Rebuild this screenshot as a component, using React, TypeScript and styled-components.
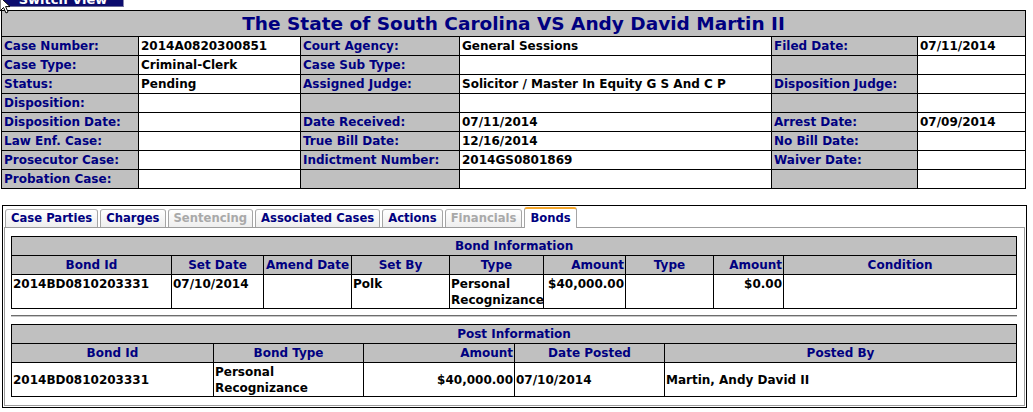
import styled, { createGlobalStyle } from 'styled-components';

const GlobalStyle = createGlobalStyle`
  html, body {
    margin: 0;
    padding: 0;
    background: #fff;
  }
  body {
    font-family: "DejaVu Sans", Verdana, sans-serif;
    font-size: 12px;
    font-weight: bold;
    color: #000;
  }
`;

const NAVY = '#000080';

type Cell = [string, string];

const caseRows: Cell[][] = [
  [['Case Number:', '2014A0820300851'], ['Court Agency:', 'General Sessions'], ['Filed Date:', '07/11/2014']],
  [['Case Type:', 'Criminal-Clerk'], ['Case Sub Type:', ''], ['', '']],
  [['Status:', 'Pending'], ['Assigned Judge:', 'Solicitor / Master In Equity G S And C P'], ['Disposition Judge:', '']],
  [['Disposition:', ''], ['', ''], ['', '']],
  [['Disposition Date:', ''], ['Date Received:', '07/11/2014'], ['Arrest Date:', '07/09/2014']],
  [['Law Enf. Case:', ''], ['True Bill Date:', '12/16/2014'], ['No Bill Date:', '']],
  [['Prosecutor Case:', ''], ['Indictment Number:', '2014GS0801869'], ['Waiver Date:', '']],
  [['Probation Case:', ''], ['', ''], ['', '']],
];

const tabs = [
  { name: 'Case Parties', disabled: false },
  { name: 'Charges', disabled: false },
  { name: 'Sentencing', disabled: true },
  { name: 'Associated Cases', disabled: false },
  { name: 'Actions', disabled: false },
  { name: 'Financials', disabled: true },
  { name: 'Bonds', disabled: false, active: true },
];

const Page = styled.div`
  position: relative;
  display: flex;
  flex-direction: column;
  align-items: flex-start;
`;

const Cursor = styled.svg`
  position: absolute;
  top: -4px;
  left: -1px;
  z-index: 5;
`;

const SwitchButton = styled.div`
  margin: -12px 0 0 3px;
  width: 121px;
  height: 19px;
  box-sizing: border-box;
  padding-top: 4px;
  line-height: 15px;
  text-align: center;
  background: #0c0c6e;
  color: #fff;
  font-size: 13px;
  border-right: 1px solid #8a8ab0;
  border-bottom: 1px solid #6a6a98;
`;

const CaseTable = styled.table`
  margin: 3px 0 0 1px;
  width: 1025px;
  border-collapse: collapse;
  table-layout: fixed;
  border: 1px solid #000;
`;

const Col = styled.col<{ $w: number }>`
  width: ${(p) => p.$w}px;
`;

const TitleCell = styled.td`
  height: 25px;
  padding: 0;
  background: #c0c0c0;
  color: ${NAVY};
  font-size: 18.5px;
  text-align: center;
  border: 1px solid #000;
`;

const InfoRow = styled.tr`
  height: 19px;
`;

const Label = styled.td`
  padding: 1px 2px 0;
  background: #c0c0c0;
  color: ${NAVY};
  border: 1px solid #000;
  white-space: nowrap;
  overflow: hidden;
  line-height: 15px;
`;

const Value = styled.td`
  padding: 1px 2px 0;
  background: #fff;
  border: 1px solid #000;
  white-space: nowrap;
  overflow: hidden;
  line-height: 15px;
`;

const TabBox = styled.div`
  margin: 16px 0 0 2px;
  width: 1025px;
  box-sizing: border-box;
  border: 1px solid #000;
  padding: 3px 0 1px;
  background: #fff;
`;

const TabStrip = styled.div`
  position: relative;
  z-index: 1;
  display: flex;
  align-items: flex-end;
  gap: 2px;
  padding-left: 2px;
  height: 18px;
`;

const Tab = styled.div<{ $active?: boolean; $disabled?: boolean }>`
  box-sizing: border-box;
  height: ${(p) => (p.$active ? '21px' : '18px')};
  margin-bottom: ${(p) => (p.$active ? '-1px' : '0')};
  padding: 0 5px;
  font-size: 11.6px;
  line-height: ${(p) => (p.$active ? '18px' : '17px')};
  color: ${(p) => (p.$disabled ? '#a9a9a9' : NAVY)};
  border: 1px solid #a5a5a5;
  border-bottom: none;
  border-top: ${(p) => (p.$active ? '2px solid #f4a62a' : '1px solid #b5b5b5')};
  border-radius: 3px 3px 0 0;
  background: ${(p) => (p.$active ? '#fff' : 'linear-gradient(#ffffff, #eeeeee)')};
  white-space: nowrap;
`;

const Panel = styled.div`
  margin: 0 1px;
  border: 1px solid #9c9c9c;
  padding: 8px 6px 8px 6px;
`;

const GridTable = styled.table`
  width: 1006px;
  border-collapse: collapse;
  table-layout: fixed;
  border: 1px solid #000;
`;

const HeadRow = styled.tr`
  height: 19px;
`;

const HeadCell = styled.th<{ $align?: string }>`
  padding: 1px 1px 0;
  background: #c0c0c0;
  color: ${NAVY};
  border: 1px solid #000;
  text-align: ${(p) => p.$align || 'center'};
  line-height: 15px;
  white-space: nowrap;
`;

const DataRow = styled.tr<{ $h: number }>`
  height: ${(p) => p.$h}px;
`;

const DataCell = styled.td<{ $align?: string; $valign?: string }>`
  padding: 1px 1px 0;
  border: 1px solid #000;
  text-align: ${(p) => p.$align || 'left'};
  vertical-align: ${(p) => p.$valign || 'top'};
  line-height: 16px;
`;

const Divider = styled.hr`
  margin: 6px 0 7px 0;
  width: 1006px;
  height: 0;
  border: none;
  border-top: 1px solid #6d6d6d;
  border-bottom: 1px solid #c8c8c8;
`;

const bondCols = [160, 92, 88, 98, 94, 82, 88, 70, 233];
const postCols = [202, 150, 151, 150, 352];
const caseCols = [137, 162, 159, 312, 146, 108];

export default function App() {
  return (
    <>
      <GlobalStyle />
      <Page>
        <Cursor width="12" height="18" viewBox="0 0 12 18">
          <path d="M1 1 L1 15 L4.5 11.5 L7 17 L9 16 L6.6 10.6 L11 10.6 Z" fill="#fff" stroke="#000" strokeWidth="1" />
        </Cursor>
        <SwitchButton>Switch View</SwitchButton>

        <CaseTable>
          <colgroup>
            {caseCols.map((w, i) => (
              <Col key={i} $w={w} />
            ))}
          </colgroup>
          <tbody>
            <tr>
              <TitleCell colSpan={6}>The State of South Carolina VS Andy David Martin II</TitleCell>
            </tr>
            {caseRows.map((row, r) => (
              <InfoRow key={r}>
                {row.map(([label, value], c) => [
                  <Label key={`l${c}`}>{label}</Label>,
                  <Value key={`v${c}`}>{value}</Value>,
                ])}
              </InfoRow>
            ))}
          </tbody>
        </CaseTable>

        <TabBox>
          <TabStrip>
            {tabs.map((t) => (
              <Tab key={t.name} $active={t.active} $disabled={t.disabled}>
                {t.name}
              </Tab>
            ))}
          </TabStrip>
          <Panel>
            <GridTable>
              <colgroup>
                {bondCols.map((w, i) => (
                  <Col key={i} $w={w} />
                ))}
              </colgroup>
              <tbody>
                <HeadRow>
                  <HeadCell colSpan={9}>Bond Information</HeadCell>
                </HeadRow>
                <HeadRow>
                  <HeadCell>Bond Id</HeadCell>
                  <HeadCell>Set Date</HeadCell>
                  <HeadCell>Amend Date</HeadCell>
                  <HeadCell>Set By</HeadCell>
                  <HeadCell>Type</HeadCell>
                  <HeadCell $align="right">Amount</HeadCell>
                  <HeadCell>Type</HeadCell>
                  <HeadCell $align="right">Amount</HeadCell>
                  <HeadCell>Condition</HeadCell>
                </HeadRow>
                <DataRow $h={34}>
                  <DataCell>2014BD0810203331</DataCell>
                  <DataCell>07/10/2014</DataCell>
                  <DataCell></DataCell>
                  <DataCell>Polk</DataCell>
                  <DataCell>Personal Recognizance</DataCell>
                  <DataCell $align="right">$40,000.00</DataCell>
                  <DataCell></DataCell>
                  <DataCell $align="right">$0.00</DataCell>
                  <DataCell></DataCell>
                </DataRow>
              </tbody>
            </GridTable>

            <Divider />

            <GridTable>
              <colgroup>
                {postCols.map((w, i) => (
                  <Col key={i} $w={w} />
                ))}
              </colgroup>
              <tbody>
                <HeadRow>
                  <HeadCell colSpan={5}>Post Information</HeadCell>
                </HeadRow>
                <HeadRow>
                  <HeadCell>Bond Id</HeadCell>
                  <HeadCell>Bond Type</HeadCell>
                  <HeadCell $align="right">Amount</HeadCell>
                  <HeadCell>Date Posted</HeadCell>
                  <HeadCell>Posted By</HeadCell>
                </HeadRow>
                <DataRow $h={34}>
                  <DataCell $valign="middle">2014BD0810203331</DataCell>
                  <DataCell $valign="middle">Personal Recognizance</DataCell>
                  <DataCell $valign="middle" $align="right">$40,000.00</DataCell>
                  <DataCell $valign="middle">07/10/2014</DataCell>
                  <DataCell $valign="middle">Martin, Andy David II</DataCell>
                </DataRow>
              </tbody>
            </GridTable>
          </Panel>
        </TabBox>
      </Page>
    </>
  );
}
